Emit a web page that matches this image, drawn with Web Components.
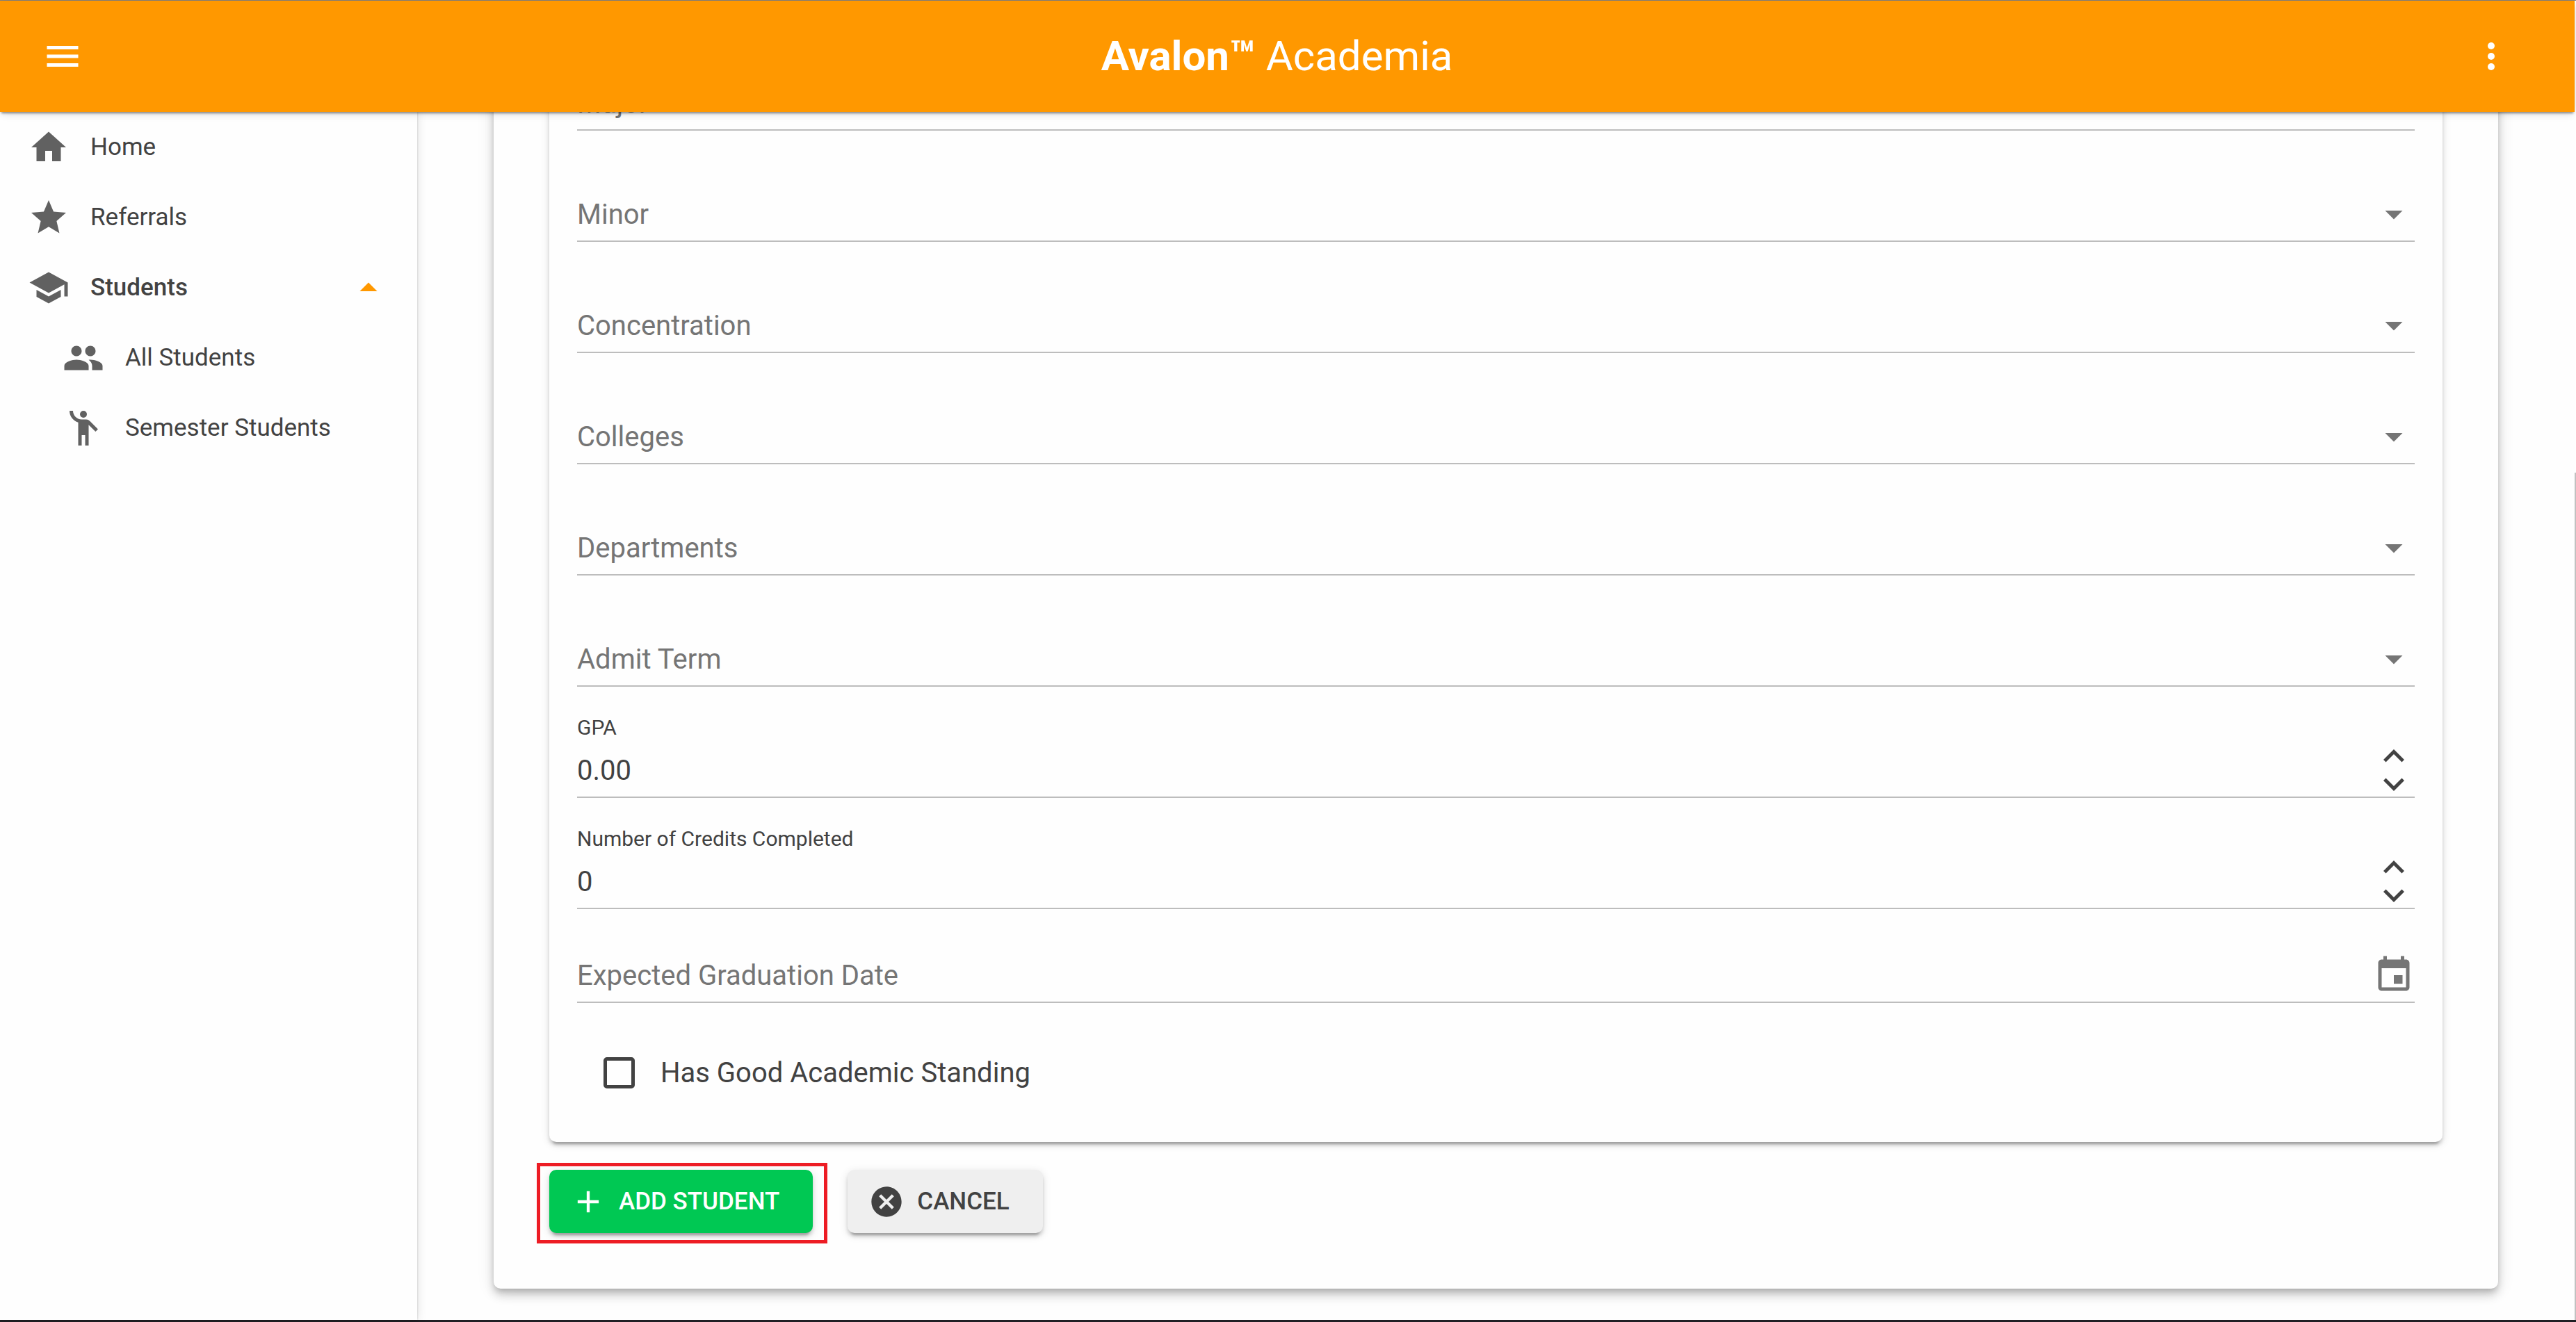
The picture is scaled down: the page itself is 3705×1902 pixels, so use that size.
<!DOCTYPE html>
<html lang="en">
<head>
<meta charset="utf-8">
<title>Avalon Academia</title>
<style>
  html, body { margin: 0; height: 100%; }
  body { font-family: Roboto, "Liberation Sans", sans-serif; background: #fefefe; color: #424242; overflow: hidden; }
</style>
</head>
<body>
<app-shell>
  <app-header slot="header"></app-header>
  <nav-drawer slot="drawer">
    <nav-item icon="home">Home</nav-item>
    <nav-item icon="star">Referrals</nav-item>
    <nav-item icon="school" expanded>Students</nav-item>
    <nav-item icon="people" nested>All Students</nav-item>
    <nav-item icon="wave" nested>Semester Students</nav-item>
  </nav-drawer>
  <surface-card level="high">
    <surface-card>
      <select-field label="Major"></select-field>
      <select-field label="Minor"></select-field>
      <select-field label="Concentration"></select-field>
      <select-field label="Colleges"></select-field>
      <select-field label="Departments"></select-field>
      <select-field label="Admit Term"></select-field>
      <number-field label="GPA" value="0.00"></number-field>
      <number-field label="Number of Credits Completed" value="0"></number-field>
      <date-field label="Expected Graduation Date"></date-field>
      <check-field label="Has Good Academic Standing"></check-field>
    </surface-card>
    <action-bar>
      <action-button icon="add" primary highlighted>ADD STUDENT</action-button>
      <action-button icon="cancel">CANCEL</action-button>
    </action-bar>
  </surface-card>
</app-shell>

<script>
const ICONS = {
  menu: '<path d="M3 18h18v-2H3v2zm0-5h18v-2H3v2zm0-7v2h18V6H3z"/>',
  more: '<circle cx="12" cy="6" r="2"/><circle cx="12" cy="12" r="2"/><circle cx="12" cy="18" r="2"/>',
  home: '<path d="M10 20v-6h4v6h5v-8h3L12 3 2 12h3v8z"/>',
  star: '<path d="M12 17.27L18.18 21l-1.64-7.03L22 9.24l-7.19-.61L12 2 9.19 8.63 2 9.24l5.46 4.73L5.82 21z"/>',
  school: '<path d="M5 13.18v4L12 21l7-3.82v-4L12 17l-7-3.82zM12 3L1 9l11 6 9-4.91V17h2V9L12 3z"/>',
  people: '<path d="M16 11c1.66 0 2.99-1.34 2.99-3S17.66 5 16 5s-3 1.34-3 3 1.34 3 3 3zm-8 0c1.66 0 2.99-1.34 2.99-3S9.66 5 8 5 5 6.34 5 8s1.34 3 3 3zm0 2c-2.33 0-7 1.17-7 3.5V19h14v-2.5C15 14.17 10.33 13 8 13zm8 0c-.29 0-.62.02-.97.05C16.19 13.89 17 15.02 17 16.5V19h6v-2.5c0-2.33-4.67-3.5-7-3.5z"/>',
  wave: '<circle cx="12" cy="4" r="2"/><path d="M15.89 8.11C15.5 7.72 14.83 7 13.53 7h-2.54C8.24 6.99 6 4.75 6 2H4c0 3.16 2.11 5.84 5 6.71V22h2v-6h2v6h2V10.05L18.95 14l1.41-1.41-4.47-4.48z"/>',
  dropUp: '<path d="M7 14l5-5 5 5z"/>',
  dropDown: '<path d="M7 10l5 5 5-5z"/>',
  up: '<path d="M7.41 15.41L12 10.83l4.59 4.58L18 14l-6-6-6 6z"/>',
  down: '<path d="M7.41 8.59L12 13.17l4.59-4.58L18 10l-6 6-6-6z"/>',
  event: '<path d="M17 12h-5v5h5v-5zM16 1v2H8V1H6v2H5c-1.11 0-1.99.9-1.99 2L3 19c0 1.1.89 2 2 2h14c1.1 0 2-.9 2-2V5c0-1.1-.9-2-2-2h-1V1h-2zm3 18H5V8h14v11z"/>',
  add: '<path d="M19 13h-6v6h-2v-6H5v-2h6V5h2v6h6v2z"/>',
  cancel: '<path d="M12 2C6.47 2 2 6.47 2 12s4.47 10 10 10 10-4.47 10-10S17.53 2 12 2zm5 13.59L15.59 17 12 13.41 8.41 17 7 15.59 10.59 12 7 8.41 8.41 7 12 10.59 15.59 7 17 8.41 13.41 12 17 15.59z"/>'
};
const icon = name => `<svg viewBox="0 0 24 24" aria-hidden="true">${ICONS[name]}</svg>`;
const BASE = `
  *, *::before, *::after { box-sizing: border-box; }
  :host { box-sizing: border-box; display: block; }
  svg { display: block; width: 60px; height: 60px; fill: currentColor; flex: none; }
  button, input, select { font: inherit; color: inherit; background: none; border: 0; margin: 0; padding: 0; }
`;
const FIELD = BASE + `
  :host { display: flex; flex-direction: column; justify-content: flex-end; height: 160px; border-bottom: 2px solid #bdbdbd; font-size: 40px; }
  .row { display: grid; grid-template: 76px / 1fr 60px; align-items: center; }
  .row > * { grid-row: 1; }
  .control { grid-column: 1 / 3; height: 76px; width: 100%; appearance: none; outline: 0; }
  .hint { grid-column: 1; align-self: end; color: #757575; line-height: 74px; pointer-events: none; }
  .icon { grid-column: 2; color: #757575; pointer-events: none; }
`;

class Base extends HTMLElement {
  connectedCallback() {
    if (this.shadowRoot) return;
    this.attachShadow({ mode: 'open' }).innerHTML = this.render();
  }
}
const define = (name, render) => customElements.define(name, class extends Base {
  render() { return render(this); }
});

define('app-shell', () => `<style>${BASE}
  :host { display: flex; height: 100vh; border-top: 1px solid #808080; border-bottom: 3px solid #201f24; }
  .app { flex: 1; min-width: 0; display: flex; flex-direction: column; }
  .body { flex: 1; min-height: 0; display: flex; }
  main { flex: 1; min-width: 0; display: flex; flex-direction: column; justify-content: flex-end; overflow: hidden; padding: 0 110px 45px; }
  .track { width: 2px; display: flex; flex-direction: column; background: #fff; }
  .track::before { content: ""; flex: 679; }
  .thumb { flex: 1219; background: #c1c1c1; }
</style>
<div class="app"><slot name="header"></slot>
  <div class="body"><slot name="drawer"></slot><main><slot></slot></main></div>
</div>
<div class="track"><div class="thumb"></div></div>`);

define('app-header', () => `<style>${BASE}
  :host { position: relative; z-index: 2; flex: none; box-shadow: 0 4px 3px -2px rgba(0,0,0,.4), 0 3px 12px -2px rgba(0,0,0,.2); }
  header { display: flex; align-items: center; justify-content: space-between; height: 160px; padding: 0 70px 0 40px; background: #ff9800; color: #fff; }
  button { width: 100px; height: 100px; display: grid; place-items: center; }
  h1 { margin: 0; font-size: 60px; font-weight: 400; line-height: 80px; }
  b { font-weight: 700; }
</style>
<header>
  <button type="button" aria-label="Menu">${icon('menu')}</button>
  <h1><b>Avalon™</b> Academia</h1>
  <button type="button" aria-label="More options">${icon('more')}</button>
</header>`);

define('nav-drawer', () => `<style>${BASE}
  :host { position: relative; z-index: 1; flex: none; width: 600px; background: #fefefe; box-shadow: 0 0 3px rgba(0,0,0,.2), 0 0 14px rgba(0,0,0,.12); }
</style><nav><slot></slot></nav>`);

define('nav-item', el => `<style>${BASE}
  a { display: flex; align-items: center; gap: 30px; height: 101px; padding: 0 40px; font-size: 35px; color: inherit; text-decoration: none; }
  :host([nested]) a { padding-left: 90px; }
  :host([expanded]) a { font-weight: 500; }
  svg { color: #616161; }
  span { flex: 1; }
  svg:nth-of-type(2) { color: #ff9800; }
</style><a href="#">${icon(el.getAttribute('icon'))}<span><slot></slot></span>${el.hasAttribute('expanded') ? icon('dropUp') : ''}</a>`);

define('surface-card', () => `<style>${BASE}
  :host { flex: none; padding: 40px 40px 50px; border-radius: 10px; background: #fefefe;
    box-shadow: 0 8px 3px -5px rgba(0,0,0,.2), 0 5px 5px rgba(0,0,0,.14), 0 3px 13px rgba(0,0,0,.12); }
  :host([level="high"]) { padding: 80px;
    box-shadow: 0 5px 10px -3px rgba(0,0,0,.2), 0 10px 13px rgba(0,0,0,.14), 0 3px 25px rgba(0,0,0,.12); }
</style><slot></slot>`);

define('select-field', el => `<style>${FIELD}</style>
<div class="row">
  <select class="control" id="c"><option value=""></option></select>
  <label class="hint" for="c">${el.getAttribute('label')}</label>
  <span class="icon">${icon('dropDown')}</span>
</div>`);

define('number-field', el => `<style>${FIELD}
  .caption { font-size: 30px; line-height: 46px; }
  .control { grid-column: 1; }
  .steps { grid-column: 2; display: flex; flex-direction: column; }
  button { height: 40px; display: grid; align-content: center; }
</style>
<label class="caption" for="c">${el.getAttribute('label')}</label>
<div class="row">
  <input class="control" id="c" inputmode="decimal" value="${el.getAttribute('value')}">
  <div class="steps">
    <button type="button" aria-label="Increase">${icon('up')}</button>
    <button type="button" aria-label="Decrease">${icon('down')}</button>
  </div>
</div>`);

define('date-field', el => `<style>${FIELD}
  :host { height: 135px; }
</style>
<div class="row">
  <input class="control" id="c">
  <label class="hint" for="c">${el.getAttribute('label')}</label>
  <span class="icon">${icon('event')}</span>
</div>`);

define('check-field', el => `<style>${BASE}
  :host { padding-top: 50px; }
  label { display: flex; align-items: center; gap: 37px; height: 100px; padding-left: 38px; font-size: 40px; }
  input { appearance: none; width: 45px; height: 45px; border: 5px solid #424242; border-radius: 5px; }
</style>
<label><input type="checkbox"><span>${el.getAttribute('label')}</span></label>`);

define('action-bar', () => `<style>${BASE}
  :host { display: flex; gap: 50px; padding-top: 40px; }
</style><slot></slot>`);

define('action-button', el => `<style>${BASE}
  :host { position: relative; }
  button { display: flex; align-items: center; gap: 18px; height: 91px; padding: 0 48px 0 30px; border-radius: 10px;
    font-size: 35px; font-weight: 500; background: #efefef;
    box-shadow: 0 8px 3px -5px rgba(0,0,0,.2), 0 5px 5px rgba(0,0,0,.14), 0 3px 13px rgba(0,0,0,.12); }
  svg { width: 52px; height: 52px; }
  :host([primary]) button { background: #00c853; color: #fff; }
  :host([highlighted])::after { content: ""; position: absolute; inset: -10px -21px -15px -18px; border: 5px solid #ed1c24; pointer-events: none; }
</style><button type="button">${icon(el.getAttribute('icon'))}<span><slot></slot></span></button>`);
</script>
</body>
</html>
